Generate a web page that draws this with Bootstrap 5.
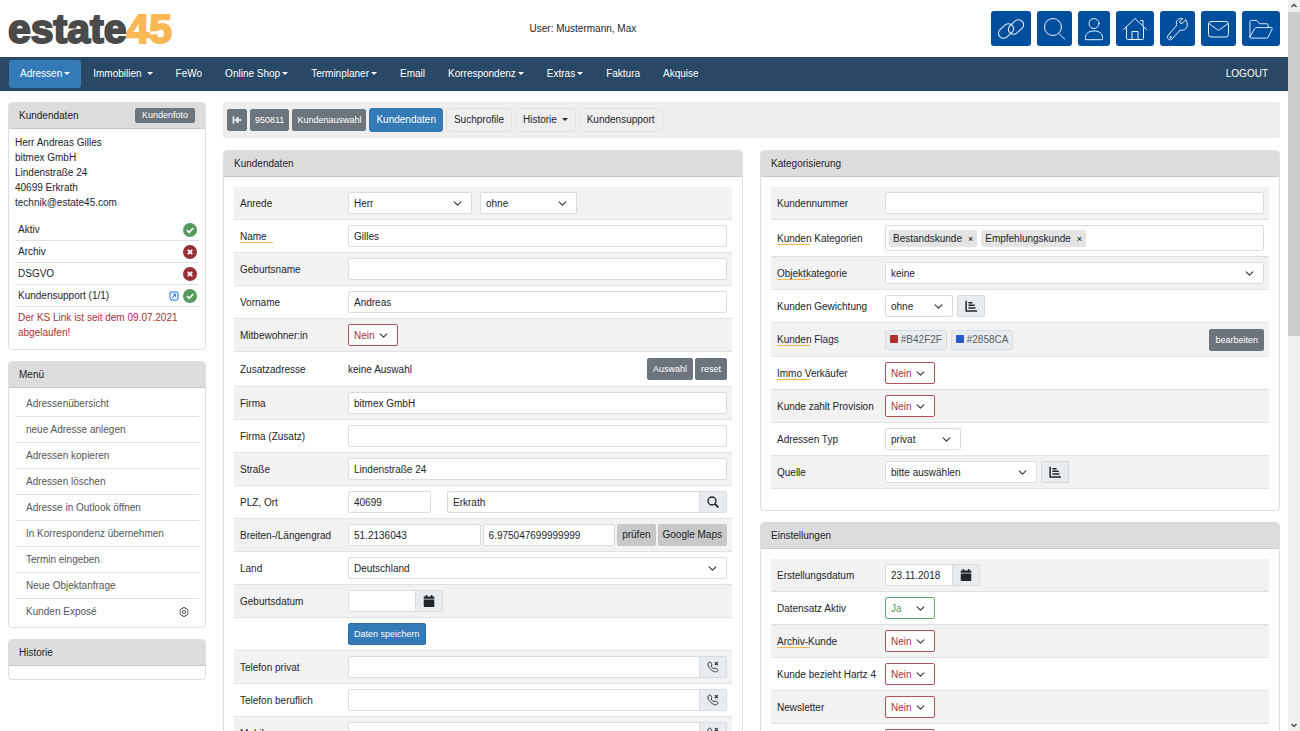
<!DOCTYPE html>
<html lang="de">
<head>
<meta charset="utf-8">
<meta name="viewport" content="width=device-width, initial-scale=1">
<title>estate45 – Kundendaten</title>
<link href="https://cdn.jsdelivr.net/npm/bootstrap@5.3.0/dist/css/bootstrap.min.css" rel="stylesheet">
<style>
:root { --ink:#212529; --line:#dee2e6; --blue:#337ab7; --navy:#284865; --red:#a8323a; --green:#57995f; }
body { font:10px/15px "Liberation Sans", Arial, sans-serif; color:var(--ink); background:#fff; }
button, input, select { font-family:inherit; }
svg { display:block; fill:none; stroke:currentColor; }
.content-pane { overflow:auto; scrollbar-width:none; }
.content-pane::-webkit-scrollbar { display:none; }

/* top bar */
.topbar { display:grid; grid-template-columns:41% auto 1fr; align-items:center; height:57px; padding:0 8px; }
.brand { font:bold 41px/48px "Liberation Sans", Arial, sans-serif; color:#4a4a4a; -webkit-text-stroke:2px currentColor; text-decoration:none; }
.brand span { color:#fcb755; }
.quickbar { gap:6px; }
.quick { height:35px; padding:0 7px; background:#004f9f; color:#fff; border:0; border-radius:3px; }
.quick svg { stroke-width:1; stroke:#e6f1fb; stroke-linejoin:round; stroke-linecap:round; }

/* main navigation */
.mainnav { background:var(--navy); padding:3px 9px; min-height:34px; }
.mainnav .nav-link { color:#fff; padding:0 11px; line-height:28px; border-radius:3px; margin-right:1px; }
.mainnav .nav-link.active { background:var(--blue); }
.dropdown-toggle::after { border-top-width:3px; border-left-width:3px; border-right-width:3px; margin-left:2px; vertical-align:2px; }
.dropdown-toggle.wide::after { margin-left:5px; }

/* panels */
.page-body { gap:17px; padding:11px 8px; }
.side { width:198px; flex:none; }
.panel { border:1px solid #dcdfe2; border-radius:4px; --bs-card-border-color:#dcdfe2; }
.panel > .card-header { background:#dcdcdc; padding:0 10px; line-height:25px; border-bottom:1px solid #c8c8c8; border-radius:3px 3px 0 0; }
.panel-gap { margin-bottom:11px; }
.side-body { padding:6px 6px 9px; }
.states { padding-top:9px; }
.state-row { border-bottom:1px solid var(--line); height:22px; padding:0 2px 0 3px; }
.dot { width:14px; height:14px; border-radius:50%; color:#fff; background:var(--green); }
.dot.off { background:#963036; }
.warn-note { color:var(--red); padding:3px 3px 0; }
.side-menu { padding:3px 6px; }
.side-menu a { color:#555; padding:0 10px 0 11px; line-height:25px; border-bottom:1px solid var(--line); text-decoration:none; }
.side-menu a:last-child { border-bottom:0; }
.empty-body { height:13px; }

/* buttons */
.btn { --bs-btn-font-size:9px; --bs-btn-line-height:20px; --bs-btn-padding-x:5px; --bs-btn-padding-y:0; --bs-btn-border-radius:2px; }
.btn-secondary { --bs-btn-bg:#6c757d; }
.btn-save { --bs-btn-color:#fff; --bs-btn-bg:var(--blue); --bs-btn-border-color:#2e6da4; }
.btn-grey { --bs-btn-font-size:10px; --bs-btn-bg:#c8c8c8; --bs-btn-border-color:#c8c8c8; --bs-btn-color:#212529; --bs-btn-padding-x:4px; }
.btn-photo { --bs-btn-line-height:13px; --bs-btn-padding-x:6px; }
.btn-gap { margin-right:2px; }
.btn-icon { width:28px; height:22px; background:#e9ecef; border:1px solid #d5dade; display:inline-flex; align-items:center; justify-content:center; }
.btn-flag { --bs-btn-font-size:10px; --bs-btn-line-height:18px; --bs-btn-color:#565e66; --bs-btn-padding-x:4px; background:#e9ecef; border-color:#dadee2; }
.swatch { width:8px; height:8px; border-radius:1px; display:inline-block; }
.toolbar-strip { background:#eee; height:36px; padding:0 4px; border-radius:3px; gap:3px; }
.toolbar-strip .btn { --bs-btn-padding-x:4px; }
.toolbar-strip .nav-link { color:var(--ink); line-height:22px; padding:0 7px; border:1px solid #e2e2e2; border-radius:3px; }
.toolbar-strip .nav-link.active { background:var(--blue); border-color:var(--blue); color:#fff; padding:0 6px; }

/* form rows */
.columns { display:grid; grid-template-columns:minmax(0,1fr) minmax(0,1fr); gap:17px; margin-top:12px; align-items:start; }
.form-grid { padding:10px; }
.form-grid.roomy { padding-bottom:21px; }
.form-grid .line { display:flex; align-items:center; min-height:33px; padding:5px 5px 5px 6px; border-bottom:1px solid var(--line); }
.form-grid .line:nth-child(odd) { background:#f2f2f2; }
.form-grid .caption { width:108px; flex:none; line-height:13px; }
.form-grid .tall { min-height:35px; }
.form-grid .flags { min-height:34px; }
.form-grid .coords { gap:2px; }
.coords .caption { margin-right:-2px; }
.coords .btn { flex:none; }
.hinted { background:linear-gradient(#f0b74e, #f0b74e) left bottom/33px 1px no-repeat; padding:0 10px 1px 0; }
.form-control, .form-select { height:22px; min-height:22px; padding:0 5px; font-size:10px; line-height:20px; border:1px solid #d9dde1; border-radius:2px; color:var(--ink); }
.form-select { background-size:9px 9px; background-position:right 9px center; padding:1px 20px 0 5px; }
.form-select.no { color:var(--red); border-color:#b0525a; width:50px; }
.form-select.yes { color:var(--green); border-color:#6ba674; width:50px; }
.input-group-text { padding:0; width:28px; justify-content:center; background:#e9ecef; border:1px solid #d9dde1; border-radius:2px; color:var(--ink); }
.date-field { width:95px; }
.w-wide { width:124px; } .w-mid { width:97px; } .w-small { width:68px; } .w-plz { width:83px; } .w-type { width:76px; } .w-source { width:152px; }
.tagbox { min-height:26px; border:1px solid #d9dde1; border-radius:2px; padding:0 3px; background:#fff; }
.tag-item { background:#e4e4e4; line-height:17px; padding:0 4px; border-radius:2px; }
.tag-item button { border:0; background:none; padding:0 0 0 6px; font-size:9px; line-height:15px; }

/* scroll track */
.track { width:12px; flex:none; background:#f0f0f0; color:#505050; }
.thumb { height:324px; background:#cdcdcd; }
</style>
</head>
<body class="vh-100 d-flex overflow-hidden">
<svg width="0" height="0" class="position-absolute" aria-hidden="true">
  <symbol id="i-cal" viewBox="0 0 16 16"><path fill="currentColor" stroke="none" d="M3.500 0h2v2h5V0h2v2H15v3H1V2h2.500zM1 6h14v9a1 1 0 0 1-1 1H2a1 1 0 0 1-1-1z"/></symbol>
  <symbol id="i-chart" viewBox="0 0 16 16"><path stroke-width="2" d="M1.500 1v13.500H16M4.500 3.500H10M4.500 7H13M4.500 10.500H14"/></symbol>
  <symbol id="i-phone" viewBox="0 0 16 16"><path stroke-width="1.200" stroke-linejoin="round" d="M3.200 1.300 1.500 3c-.7 1-.3 3.300 1.700 6s5 5 7.500 5.500c1.300.2 2.300-.2 3.800-1.800.3-.4.2-.9-.2-1.200l-2.200-1.700c-.4-.3-.7-.3-1.100-.1l-1.800.6C7.500 9.500 6.200 8 5.600 6.700l.6-1.800c.1-.4.100-.8-.2-1.100L4.400 1.400c-.3-.4-.8-.4-1.200-.1z"/><path stroke-width="1.500" d="m10.500 1.500 4 4M14.500 1.500l-4 4"/></symbol>
  <symbol id="i-ok" viewBox="0 0 14 14"><path stroke-width="1.800" d="m4 7.200 2.200 2.100L10.200 5"/></symbol>
  <symbol id="i-x" viewBox="0 0 14 14"><path stroke-width="1.900" d="m4.800 4.800 4.400 4.400M9.200 4.800 4.800 9.200"/></symbol>
</svg>

<div class="content-pane flex-grow-1">
  <header class="topbar">
    <a class="brand" href="#">estate<span>45</span></a>
    <div>User: Mustermann, Max</div>
    <div class="d-flex justify-content-end quickbar">
      <button class="quick" aria-label="Links"><svg width="26" height="24" viewBox="0 0 26 24"><rect x="-0.500" y="9" width="17" height="10" rx="5" transform="rotate(-42 8 14)"/><rect x="9.500" y="5" width="17" height="10" rx="5" transform="rotate(-42 18 10)"/></svg></button>
      <button class="quick" aria-label="Suche"><svg width="21" height="24" viewBox="0 0 21 24"><circle cx="9" cy="10" r="8.500"/><path d="m15 16.500 6 6"/></svg></button>
      <button class="quick" aria-label="Kunden"><svg width="18" height="24" viewBox="0 0 18 24"><circle cx="9" cy="6.500" r="5"/><path d="M.5 22v-1.500c0-4 3-6.500 8.500-6.500s8.500 2.500 8.500 6.500V22c0 .5-.3.700-.7.700H1.200c-.4 0-.7-.2-.7-.7z"/></svg></button>
      <button class="quick" aria-label="Start"><svg width="24" height="24" viewBox="0 0 24 24"><path d="M.5 12.500 12 1.500l11.500 11M3.500 10v11.500c0 .7.300 1 1 1h15c.7 0 1-.3 1-1V10M17.500 3.500h2.500V9M9 22v-7.500h6V22"/></svg></button>
      <button class="quick" aria-label="Einstellungen"><svg width="21" height="24" viewBox="0 0 21 24"><path d="M18.700 3 15 6.500l-1.800-.4-.6-1.900L16 1.600c-3-1-6.500.8-6.700 4.400 0 1 .1 1.600.4 2.400L1.300 18c-1.300 1.700-1 3.200.1 4.200 1.200 1 2.600.9 3.900-.4L13 13c3.500.9 6.700-.8 7.200-4.300.3-2.200-.3-4.300-1.500-5.700z"/><circle cx="3.500" cy="20.200" r=".7"/></svg></button>
      <button class="quick" aria-label="Nachrichten"><svg width="21" height="24" viewBox="0 0 21 24"><rect x=".5" y="4.500" width="20" height="15.500" rx="2.500"/><path d="m1.500 7 8 5.700c.7.500 1.300.5 2 0l8-5.700"/></svg></button>
      <button class="quick" aria-label="Dokumente"><svg width="24" height="24" viewBox="0 0 25 24"><path d="M1 20V4.500C1 3.500 1.500 3 2.500 3H8l3 3.500h7.500c1 0 1.500.5 1.500 1.500v2.500M1 20l5-8.500c.4-.7.800-1 1.500-1h16c.7 0 1 .5.700 1.200L20 20.500c-.4.800-.8 1-1.500 1H2C1.300 21.500 1 21 1 20z"/></svg></button>
    </div>
  </header>

  <nav class="mainnav d-flex align-items-center">
    <a class="nav-link active dropdown-toggle" href="#">Adressen</a>
    <a class="nav-link dropdown-toggle wide" href="#">Immobilien</a>
    <a class="nav-link" href="#">FeWo</a>
    <a class="nav-link dropdown-toggle" href="#">Online Shop</a>
    <a class="nav-link dropdown-toggle" href="#">Terminplaner</a>
    <a class="nav-link" href="#">Email</a>
    <a class="nav-link dropdown-toggle" href="#">Korrespondenz</a>
    <a class="nav-link dropdown-toggle" href="#">Extras</a>
    <a class="nav-link" href="#">Faktura</a>
    <a class="nav-link" href="#">Akquise</a>
    <a class="nav-link ms-auto me-0" href="#">LOGOUT</a>
  </nav>

  <div class="page-body d-flex">
    <aside class="side">
      <section class="card panel panel-gap">
        <div class="card-header d-flex justify-content-between align-items-center">Kundendaten <button class="btn btn-secondary btn-photo">Kundenfoto</button></div>
        <div class="side-body">
          <div>Herr Andreas Gilles<br>bitmex GmbH<br>Lindenstraße 24<br>40699 Erkrath<br>technik@estate45.com</div>
          <div class="states">
            <div class="state-row d-flex align-items-center justify-content-between">Aktiv <svg class="dot"><use href="#i-ok"/></svg></div>
            <div class="state-row d-flex align-items-center justify-content-between">Archiv <svg class="dot off"><use href="#i-x"/></svg></div>
            <div class="state-row d-flex align-items-center justify-content-between">DSGVO <svg class="dot off"><use href="#i-x"/></svg></div>
            <div class="state-row d-flex align-items-center">Kundensupport (1/1)
              <a href="#" class="ms-auto me-1" aria-label="Öffnen"><svg width="10" height="10" viewBox="0 0 10 10"><rect x="1" y="1" width="8" height="8" rx="1"/><path d="M3 7l3.500-3.500M3.800 3.300h2.900v2.900"/></svg></a>
              <svg class="dot"><use href="#i-ok"/></svg></div>
          </div>
          <div class="warn-note">Der KS Link ist seit dem 09.07.2021 abgelaufen!</div>
        </div>
      </section>
      <section class="card panel panel-gap">
        <div class="card-header">Menü</div>
        <div class="side-menu d-flex flex-column">
          <a href="#">Adressenübersicht</a><a href="#">neue Adresse anlegen</a><a href="#">Adressen kopieren</a><a href="#">Adressen löschen</a><a href="#">Adresse in Outlook öffnen</a><a href="#">In Korrespondenz übernehmen</a><a href="#">Termin eingeben</a><a href="#">Neue Objektanfrage</a>
          <a href="#" class="d-flex justify-content-between align-items-center">Kunden Exposé <svg width="10" height="10" viewBox="0 0 10 10"><path stroke-linejoin="round" d="M4 .6h2l.5 1.300 1.400-.2 1.200 1.900L8.400 5l.7 1.400-1.200 1.900-1.400-.2L6 9.400H4l-.5-1.300-1.400.2L.9 6.400 1.600 5 .9 3.600l1.200-1.900 1.400.2z"/><circle cx="5" cy="5" r="1.600"/></svg></a>
        </div>
      </section>
      <section class="card panel">
        <div class="card-header">Historie</div>
        <div class="empty-body"></div>
      </section>
    </aside>

    <main class="flex-grow-1">
      <div class="toolbar-strip d-flex align-items-center">
        <button class="btn btn-secondary" aria-label="Zurück"><svg width="10" height="20" viewBox="0 0 10 20"><path stroke-width="1.600" d="M1.500 6.500v7M9.500 10H4M6.500 7.200 3.800 10l2.700 2.800"/></svg></button>
        <button class="btn btn-secondary">950811</button>
        <button class="btn btn-secondary">Kundenauswahl</button>
        <a class="nav-link active" href="#">Kundendaten</a>
        <a class="nav-link" href="#">Suchprofile</a>
        <a class="nav-link dropdown-toggle" href="#">Historie&nbsp;</a>
        <a class="nav-link" href="#">Kundensupport</a>
      </div>
      <div class="columns">
        <section class="card panel">
          <div class="card-header">Kundendaten</div>
          <form class="form-grid">
            <div class="line"><label class="caption" for="anrede">Anrede</label><select id="anrede" class="form-select w-wide me-2"><option>Herr</option></select><select class="form-select w-mid" aria-label="Titel"><option>ohne</option></select></div>
            <div class="line"><label class="caption" for="name"><span class="hinted">Name</span></label><input id="name" class="form-control" value="Gilles"></div>
            <div class="line"><label class="caption" for="gname">Geburtsname</label><input id="gname" class="form-control"></div>
            <div class="line"><label class="caption" for="vorname">Vorname</label><input id="vorname" class="form-control" value="Andreas"></div>
            <div class="line"><label class="caption" for="mitb">Mitbewohner:in</label><select id="mitb" class="form-select no"><option>Nein</option></select></div>
            <div class="line tall"><span class="caption">Zusatzadresse</span><span class="me-auto">keine Auswahl</span><button type="button" class="btn btn-secondary btn-gap">Auswahl</button><button type="button" class="btn btn-secondary">reset</button></div>
            <div class="line"><label class="caption" for="firma">Firma</label><input id="firma" class="form-control" value="bitmex GmbH"></div>
            <div class="line"><label class="caption" for="firma2">Firma (Zusatz)</label><input id="firma2" class="form-control"></div>
            <div class="line"><label class="caption" for="str">Straße</label><input id="str" class="form-control" value="Lindenstraße 24"></div>
            <div class="line"><label class="caption" for="plz">PLZ, Ort</label><input id="plz" class="form-control w-plz me-3 flex-shrink-0" value="40699"><div class="input-group flex-nowrap"><input class="form-control" aria-label="Ort" value="Erkrath"><button type="button" class="input-group-text" aria-label="Ort suchen"><svg width="12" height="12" viewBox="0 0 12 12"><circle cx="5" cy="5" r="4" stroke-width="1.400"/><path stroke-width="1.800" d="m8 8 3.500 3.500"/></svg></button></div></div>
            <div class="line coords"><label class="caption" for="lat">Breiten-/Längengrad</label><input id="lat" class="form-control" value="51.2136043"><input class="form-control" aria-label="Längengrad" value="6.975047699999999"><button type="button" class="btn btn-grey">prüfen</button><button type="button" class="btn btn-grey">Google Maps</button></div>
            <div class="line"><label class="caption" for="land">Land</label><select id="land" class="form-select"><option>Deutschland</option></select></div>
            <div class="line"><label class="caption" for="geb">Geburtsdatum</label><div class="input-group date-field flex-nowrap"><input id="geb" class="form-control"><button type="button" class="input-group-text" aria-label="Kalender"><svg width="12" height="12"><use href="#i-cal"/></svg></button></div></div>
            <div class="line"><span class="caption"></span><button type="button" class="btn btn-save">Daten speichern</button></div>
            <div class="line"><label class="caption" for="telp">Telefon privat</label><div class="input-group flex-nowrap"><input id="telp" class="form-control"><button type="button" class="input-group-text" aria-label="Anrufen"><svg width="12" height="12"><use href="#i-phone"/></svg></button></div></div>
            <div class="line"><label class="caption" for="telb">Telefon beruflich</label><div class="input-group flex-nowrap"><input id="telb" class="form-control"><button type="button" class="input-group-text" aria-label="Anrufen"><svg width="12" height="12"><use href="#i-phone"/></svg></button></div></div>
            <div class="line"><label class="caption" for="mob">Mobil</label><div class="input-group flex-nowrap"><input id="mob" class="form-control"><button type="button" class="input-group-text" aria-label="Anrufen"><svg width="12" height="12"><use href="#i-phone"/></svg></button></div></div>
          </form>
        </section>

        <div>
          <section class="card panel panel-gap">
            <div class="card-header">Kategorisierung</div>
            <form class="form-grid roomy">
              <div class="line"><label class="caption" for="knr">Kundennummer</label><input id="knr" class="form-control"></div>
              <div class="line"><span class="caption"><span class="hinted">Kunden Kategorien</span></span><div class="tagbox d-flex flex-grow-1 align-items-center gap-1"><span class="tag-item">Bestandskunde<button type="button" aria-label="Entfernen">×</button></span><span class="tag-item">Empfehlungskunde<button type="button" aria-label="Entfernen">×</button></span></div></div>
              <div class="line"><label class="caption" for="okat"><span class="hinted">Objektkategorie</span></label><select id="okat" class="form-select"><option>keine</option></select></div>
              <div class="line"><label class="caption" for="gew">Kunden Gewichtung</label><select id="gew" class="form-select w-small me-1"><option>ohne</option></select><button type="button" class="btn btn-icon" aria-label="Auswertung"><svg width="12" height="12"><use href="#i-chart"/></svg></button></div>
              <div class="line flags"><span class="caption"><span class="hinted">Kunden Flags</span></span><button type="button" class="btn btn-flag me-1"><span class="swatch" style="background:#B42F2F"></span> #B42F2F</button><button type="button" class="btn btn-flag"><span class="swatch" style="background:#2858CA"></span> #2858CA</button><button type="button" class="btn btn-secondary ms-auto">bearbeiten</button></div>
              <div class="line"><label class="caption" for="immo"><span class="hinted">Immo Verkäufer</span></label><select id="immo" class="form-select no"><option>Nein</option></select></div>
              <div class="line"><label class="caption" for="prov">Kunde zahlt Provision</label><select id="prov" class="form-select no"><option>Nein</option></select></div>
              <div class="line"><label class="caption" for="typ">Adressen Typ</label><select id="typ" class="form-select w-type"><option>privat</option></select></div>
              <div class="line"><label class="caption" for="quelle">Quelle</label><select id="quelle" class="form-select w-source me-1"><option>bitte auswählen</option></select><button type="button" class="btn btn-icon" aria-label="Auswertung"><svg width="12" height="12"><use href="#i-chart"/></svg></button></div>
            </form>
          </section>
          <section class="card panel">
            <div class="card-header">Einstellungen</div>
            <form class="form-grid">
              <div class="line"><label class="caption" for="erst">Erstellungsdatum</label><div class="input-group date-field flex-nowrap"><input id="erst" class="form-control" value="23.11.2018"><button type="button" class="input-group-text" aria-label="Kalender"><svg width="12" height="12"><use href="#i-cal"/></svg></button></div></div>
              <div class="line"><label class="caption" for="aktiv">Datensatz Aktiv</label><select id="aktiv" class="form-select yes"><option>Ja</option></select></div>
              <div class="line"><label class="caption" for="archiv"><span class="hinted">Archiv-Kunde</span></label><select id="archiv" class="form-select no"><option>Nein</option></select></div>
              <div class="line"><label class="caption" for="hartz">Kunde bezieht Hartz 4</label><select id="hartz" class="form-select no"><option>Nein</option></select></div>
              <div class="line"><label class="caption" for="news">Newsletter</label><select id="news" class="form-select no"><option>Nein</option></select></div>
              <div class="line"><span class="caption"></span><select class="form-select no" aria-label="Weitere Einstellung"><option>Nein</option></select></div>
            </form>
          </section>
        </div>
      </div>
    </main>
  </div>
</div>

<div class="track d-flex flex-column" aria-hidden="true">
  <svg width="12" height="12" viewBox="0 0 12 12"><path stroke-width="1.500" d="M3.500 7 6 4.500 8.500 7"/></svg>
  <div class="thumb"></div>
  <svg class="mt-auto" width="12" height="12" viewBox="0 0 12 12"><path stroke-width="1.500" d="M3.500 5 6 7.500 8.500 5"/></svg>
</div>

<script src="https://cdn.jsdelivr.net/npm/bootstrap@5.3.0/dist/js/bootstrap.bundle.min.js"></script>
</body>
</html>
